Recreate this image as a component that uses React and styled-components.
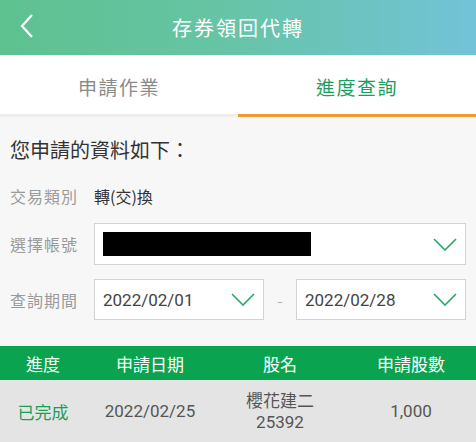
import React from "react";
import styled, { createGlobalStyle } from "styled-components";

const GlobalStyle = createGlobalStyle`
  html, body {
    margin: 0;
    padding: 0;
    background: #f7f7f7;
    font-family: "Noto Sans CJK TC", "Noto Sans", Roboto, sans-serif;
  }
`;

const Page = styled.main`
  width: 476px;
  height: 442px;
  overflow: hidden;
  background: #f7f7f7;
  display: flex;
  flex-direction: column;
`;

const Header = styled.header`
  height: 57px;
  display: flex;
  align-items: center;
  justify-content: center;
  position: relative;
  background: linear-gradient(90deg, #5ec190 0%, #66c4a4 45%, #72c3d8 100%);
  color: #fff;
  font-size: 20px;
  letter-spacing: 2px;
`;

const BackButton = styled.button`
  position: absolute;
  left: 16px;
  top: 14px;
  width: 22px;
  height: 24px;
  padding: 0;
  border: none;
  background: transparent;
  display: flex;
  align-items: center;
  justify-content: center;
`;

const Tabs = styled.nav`
  height: 64px;
  display: flex;
  background: #fff;
`;

const Tab = styled.div`
  flex: 1;
  display: flex;
  align-items: center;
  justify-content: center;
  padding-top: 4px;
  font-size: 19px;
  letter-spacing: 1.5px;
  color: ${(p) => (p.$active ? "#1a9e5c" : "#8a8a8a")};
  border-bottom: 3px solid ${(p) => (p.$active ? "#ec9a2f" : "#eeeeee")};
`;

const Body = styled.section`
  padding: 17px 10px 0;
  display: flex;
  flex-direction: column;
`;

const Title = styled.h2`
  margin: 0 0 18px;
  font-size: 20px;
  font-weight: 400;
  color: #333;
  line-height: 32px;
`;

const Row = styled.div`
  display: flex;
  align-items: center;
  height: ${(p) => p.$h || 42}px;
  margin-bottom: ${(p) => p.$mb || 0}px;
`;

const Label = styled.span`
  width: 84px;
  font-size: 16px;
  letter-spacing: 1px;
  color: #9a9a9a;
  flex-shrink: 0;
`;

const Value = styled.span`
  font-size: 16px;
  color: #333;
`;

const SelectBox = styled.div`
  flex: 1;
  height: 100%;
  box-sizing: border-box;
  border: 1px solid #d3d3d3;
  background: #fff;
  display: flex;
  align-items: center;
  justify-content: space-between;
  padding: 0 8px 0 8px;
  font-size: 17px;
  color: #444;
  font-family: Roboto, "Noto Sans", sans-serif;
`;

const Mask = styled.div`
  width: 208px;
  height: 24px;
  background: #000;
`;

const Dash = styled.span`
  width: 32px;
  text-align: center;
  color: #aaa;
  font-size: 14px;
`;

const Table = styled.div`
  margin-top: 26px;
  display: flex;
  flex-direction: column;
`;

const Grid = styled.div`
  display: grid;
  grid-template-columns: 86px 128px 132px 130px;
  align-items: center;
  height: ${(p) => p.$h}px;
  background: ${(p) => p.$bg};
`;

const Cell = styled.div`
  text-align: center;
  font-size: 17px;
  line-height: 21px;
  color: ${(p) => p.$color || "#555"};
  font-family: ${(p) =>
    p.$num ? 'Roboto, "Noto Sans", sans-serif' : '"Noto Sans CJK TC", sans-serif'};
`;

const Chevron = ({ w = 24 }) => (
  <svg width={w} height="13" viewBox="0 0 24 13" fill="none">
    <path d="M1 1 L12 12 L23 1" stroke="#2aa56a" strokeWidth="1.6" />
  </svg>
);

const App = () => {
  return (
    <Page>
      <GlobalStyle />
      <Header>
        <BackButton aria-label="back">
          <svg width="14" height="24" viewBox="0 0 14 24" fill="none">
            <path d="M12 1 L2 12 L12 23" stroke="#fff" strokeWidth="2.2" />
          </svg>
        </BackButton>
        存券領回代轉
      </Header>
      <Tabs>
        <Tab>申請作業</Tab>
        <Tab $active>進度查詢</Tab>
      </Tabs>
      <Body>
        <Title>您申請的資料如下：</Title>
        <Row $h={24} $mb={15}>
          <Label>交易類別</Label>
          <Value>轉(交)換</Value>
        </Row>
        <Row $h={42} $mb={14}>
          <Label>選擇帳號</Label>
          <SelectBox>
            <Mask />
            <Chevron />
          </SelectBox>
        </Row>
        <Row $h={41}>
          <Label>查詢期間</Label>
          <SelectBox>
            2022/02/01
            <Chevron />
          </SelectBox>
          <Dash>-</Dash>
          <SelectBox>
            2022/02/28
            <Chevron />
          </SelectBox>
        </Row>
      </Body>
      <Table>
        <Grid $h={34} $bg="#0aa34f">
          <Cell $color="#fff">進度</Cell>
          <Cell $color="#fff">申請日期</Cell>
          <Cell $color="#fff">股名</Cell>
          <Cell $color="#fff">申請股數</Cell>
        </Grid>
        <Grid $h={62} $bg="#e4e4e4">
          <Cell $color="#1a9e5c">已完成</Cell>
          <Cell $num>2022/02/25</Cell>
          <Cell>
            櫻花建二
            <br />
            <Cell as="span" $num>25392</Cell>
          </Cell>
          <Cell $num>1,000</Cell>
        </Grid>
      </Table>
    </Page>
  );
};

export default App;
